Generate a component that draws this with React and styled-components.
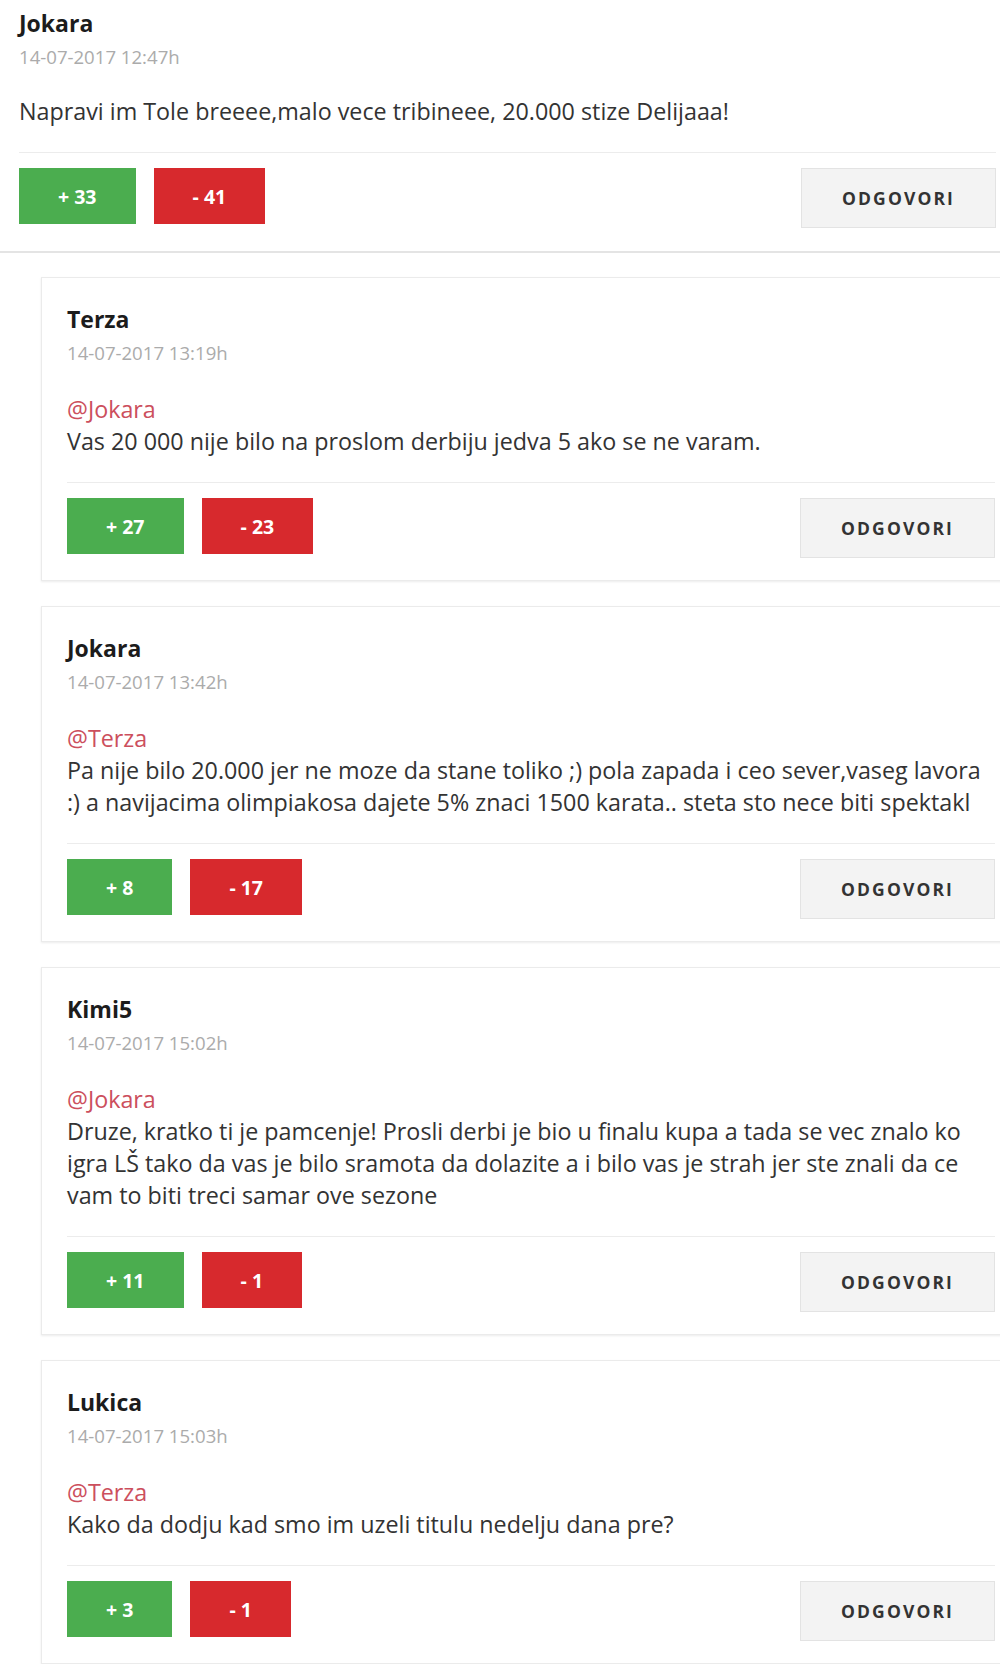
import React from 'react';
import styled, { createGlobalStyle } from 'styled-components';

const GlobalStyle = createGlobalStyle`
  html, body {
    margin: 0;
    padding: 0;
    background: #fff;
    overflow-x: hidden;
  }
  body {
    font-family: "Open Sans", "Noto Sans", Arial, sans-serif;
    color: #333;
  }
`;

const Page = styled.div`
  width: 1021px;
`;

const MainComment = styled.div`
  padding: 9px 25px 23px 19px;
  border-bottom: 2px solid #e4e4e4;
`;

const Replies = styled.div`
  display: flex;
  flex-direction: column;
  gap: 25px;
  padding: 24px 0 0 41px;
`;

const ReplyCard = styled.div`
  border: 1px solid #ebebeb;
  box-shadow: 0 1px 2px rgba(0, 0, 0, 0.08);
  padding: 27px 25px 22px;
`;

const Author = styled.div`
  font-size: 23px;
  line-height: 28px;
  font-weight: 700;
  color: #1c1c1c;
`;

const DateLine = styled.div`
  margin-top: 8px;
  font-size: 18.6px;
  line-height: 24px;
  color: #ababab;
`;

const Content = styled.div`
  margin-top: ${(p) => (p.$reply ? '28px' : '26px')};
  padding-bottom: 25px;
  border-bottom: 1px solid #ececec;
  font-size: 23.3px;
  line-height: 32px;
  color: #333;
`;

const Mention = styled.div`
  color: #cc4f5d;
`;

const Actions = styled.div`
  display: flex;
  align-items: flex-start;
  padding-top: 15px;
`;

const VoteButton = styled.button`
  height: 56px;
  padding: 0 39px;
  margin-right: 18px;
  border: none;
  border-radius: 0;
  font-family: inherit;
  font-size: 19.5px;
  font-weight: 700;
  color: #fff;
  background: ${(p) => (p.$down ? '#d7292d' : '#4bad4f')};
  cursor: pointer;
`;

const ReplyButton = styled.button`
  margin-left: auto;
  width: 195px;
  height: 60px;
  border: 1px solid #e3e3e3;
  background: #f3f3f3;
  font-family: inherit;
  font-size: 17.5px;
  font-weight: 700;
  letter-spacing: 2.1px;
  color: #333;
  cursor: pointer;
`;

const replies = [
  {
    id: 1,
    author: 'Terza',
    date: '14-07-2017 13:19h',
    mention: '@Jokara',
    text: 'Vas 20 000 nije bilo na proslom derbiju jedva 5 ako se ne varam.',
    up: 27,
    down: 23,
  },
  {
    id: 2,
    author: 'Jokara',
    date: '14-07-2017 13:42h',
    mention: '@Terza',
    text: 'Pa nije bilo 20.000 jer ne moze da stane toliko ;) pola zapada i ceo sever,vaseg lavora :) a navijacima olimpiakosa dajete 5% znaci 1500 karata.. steta sto nece biti spektakl',
    up: 8,
    down: 17,
  },
  {
    id: 3,
    author: 'Kimi5',
    date: '14-07-2017 15:02h',
    mention: '@Jokara',
    text: 'Druze, kratko ti je pamcenje! Prosli derbi je bio u finalu kupa a tada se vec znalo ko igra LŠ tako da vas je bilo sramota da dolazite a i bilo vas je strah jer ste znali da ce vam to biti treci samar ove sezone',
    up: 11,
    down: 1,
  },
  {
    id: 4,
    author: 'Lukica',
    date: '14-07-2017 15:03h',
    mention: '@Terza',
    text: 'Kako da dodju kad smo im uzeli titulu nedelju dana pre?',
    up: 3,
    down: 1,
  },
];

function CommentActions({ up, down }) {
  return (
    <Actions>
      <VoteButton>+ {up}</VoteButton>
      <VoteButton $down>- {down}</VoteButton>
      <ReplyButton>ODGOVORI</ReplyButton>
    </Actions>
  );
}

export default function App() {
  return (
    <Page>
      <GlobalStyle />
      <MainComment>
        <Author>Jokara</Author>
        <DateLine>14-07-2017 12:47h</DateLine>
        <Content>Napravi im Tole breeee,malo vece tribineee, 20.000 stize Delijaaa!</Content>
        <CommentActions up={33} down={41} />
      </MainComment>
      <Replies>
        {replies.map((r) => (
          <ReplyCard key={r.id}>
            <Author>{r.author}</Author>
            <DateLine>{r.date}</DateLine>
            <Content $reply>
              <Mention>{r.mention}</Mention>
              {r.text}
            </Content>
            <CommentActions up={r.up} down={r.down} />
          </ReplyCard>
        ))}
      </Replies>
    </Page>
  );
}
